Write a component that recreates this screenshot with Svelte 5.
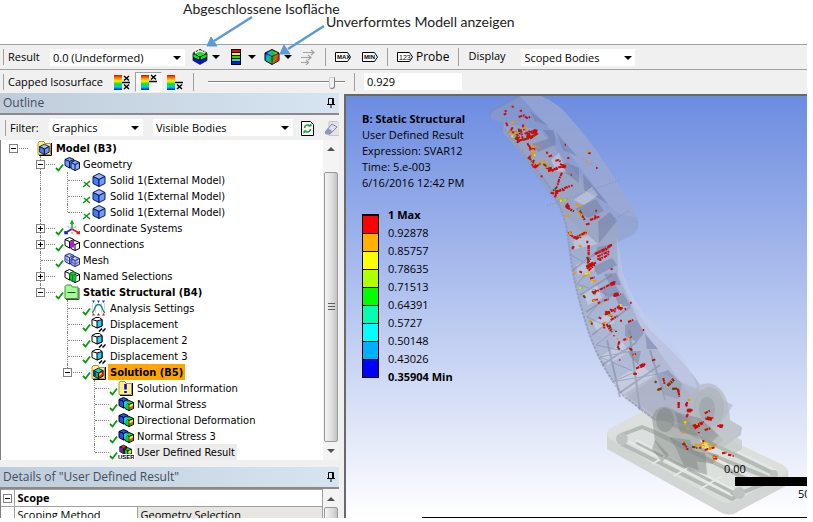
<script lang="ts">
  // Result toolbar, outline tree and graphics window of the solver

  interface TreeNode {
    label: string;
    level: number;
    icon: string;
    mark?: 'check' | 'cross';
    toggle?: '+' | '-';
    guides?: number[];
    last?: boolean;
    bold?: boolean;
    state?: 'active' | 'selected';
  }

  const nodes: TreeNode[] = [
    { label: 'Model (B3)', level: 0, icon: 'model', toggle: '-', bold: true, last: true },
    { label: 'Geometry', level: 1, icon: 'geometry', mark: 'check', toggle: '-' },
    { label: 'Solid 1(External Model)', level: 2, icon: 'solid', mark: 'cross', guides: [1] },
    { label: 'Solid 1(External Model)', level: 2, icon: 'solid', mark: 'cross', guides: [1] },
    { label: 'Solid 1(External Model)', level: 2, icon: 'solid', mark: 'cross', guides: [1], last: true },
    { label: 'Coordinate Systems', level: 1, icon: 'axes', mark: 'check', toggle: '+' },
    { label: 'Connections', level: 1, icon: 'connections', mark: 'check', toggle: '+' },
    { label: 'Mesh', level: 1, icon: 'mesh', mark: 'check' },
    { label: 'Named Selections', level: 1, icon: 'named', toggle: '+' },
    { label: 'Static Structural (B4)', level: 1, icon: 'folder', mark: 'check', toggle: '-', bold: true, last: true },
    { label: 'Analysis Settings', level: 2, icon: 'settings', mark: 'check' },
    { label: 'Displacement', level: 2, icon: 'displacement', mark: 'check' },
    { label: 'Displacement 2', level: 2, icon: 'displacement', mark: 'check' },
    { label: 'Displacement 3', level: 2, icon: 'displacement', mark: 'check' },
    { label: 'Solution (B5)', level: 2, icon: 'solution', mark: 'check', toggle: '-', bold: true, last: true, state: 'active' },
    { label: 'Solution Information', level: 3, icon: 'info', mark: 'check' },
    { label: 'Normal Stress', level: 3, icon: 'result', mark: 'check' },
    { label: 'Directional Deformation', level: 3, icon: 'result', mark: 'check' },
    { label: 'Normal Stress 3', level: 3, icon: 'result', mark: 'check' },
    { label: 'User Defined Result', level: 3, icon: 'user', mark: 'check', last: true, state: 'selected' }
  ];

  const legendColors = ['#ff0000', '#ffb000', '#ffff00', '#b0ff00', '#00ff00', '#00ffb0', '#00ffff', '#00b0ff', '#0000ff'];
  const legendLabels = ['1 Max', '0.92878', '0.85757', '0.78635', '0.71513', '0.64391', '0.5727', '0.50148', '0.43026', '0.35904 Min'];

  let isoValue = $state('0.929');
  let sliderValue = $state(92);
</script>

{#snippet cube(top: string, left: string, right: string, stroke = '#000')}
  <g {stroke} stroke-linejoin="round">
    <path d="M8 1.500 14 4.500 8 7.500 2 4.500z" fill={top} />
    <path d="M2 4.500 8 7.500V14.500L2 11.500z" fill={left} />
    <path d="M14 4.500 8 7.500V14.500L14 11.500z" fill={right} />
  </g>
{/snippet}

{#snippet pair(a: string, b: string, stroke = '#000')}
  <g {stroke} stroke-linejoin="round">
    <path d="M5.500 1.500 10 3.500V10.500L5.500 12 1 9.500V3.500z" fill={a} />
    <path d="M1 3.500 5.500 5.500 10 3.500M5.500 5.500V12" fill="none" />
    <path d="M11 4.500 15.500 6.500V12.500L11 14.500 7 12.500V6.500z" fill={b} />
    <path d="M7 6.500 11 8.500 15.500 6.500M11 8.500V14.500" fill="none" />
  </g>
{/snippet}

{#snippet nodeIcon(name: string)}
  <svg class="icon" viewBox="0 0 16 16" aria-hidden="true">
    {#if name === 'model' || name === 'solution' || name === 'info'}
      <path d="M1 3.500 2 1.500H7L8 3.500H13.500V14.500H1z" fill="#fff08c" stroke="#a8983c" />
      <path d="M14.500 3V15.500H2" fill="none" stroke="#000" />
      {#if name === 'info'}
        <path d="M7.500 4V9.500M7.500 11V13" stroke="#0000e0" stroke-width="2.500" />
      {:else}
        <g transform="translate(1 3) scale(.8)">
          {#if name === 'model'}
            {@render cube('#a9c2ff', '#4c7ef0', '#6a96ff')}
          {:else}
            {@render cube('#20c8e0', '#16c832', '#f02a10')}
            <path d="M2.500 6V11L5 12V7z" fill="#1030d0" />
            <path d="M9 8.500 12 7V9L9 11z" fill="#ffe800" />
          {/if}
        </g>
      {/if}
    {:else if name === 'solid'}
      {@render cube('#9ab8ff', '#4a7af0', '#6f9bff', '#0a1a50')}
    {:else if name === 'geometry'}
      {@render pair('#6c98ff', '#86abff', '#06133c')}
    {:else if name === 'connections'}
      {@render pair('#ffffff', '#ffffff')}
      <path d="M6 6 10 4.500V11.500L6 11.500z" fill="#b416dc" />
    {:else if name === 'mesh'}
      {@render pair('#e2e6ff', '#d5dcff', '#1a2470')}
      <path d="M1 7 6 9 10 7M3 3V11M8 4V11M3 2 8 4M7 10 11 12 15 10M9 6V13M13 6V13" stroke="#3a48d0" stroke-width=".7" fill="none" />
    {:else if name === 'named'}
      {@render pair('#ffffff', '#ffffff')}
      <path d="M5 5.500 10 3.500 12 6V12.500L9 13.500 6 11.500z" fill="#12c832" stroke="#046a18" stroke-width=".6" />
      <path d="M5 5.500 8.500 7.500 12 6M8.500 7.500V13" stroke="#046a18" stroke-width=".8" fill="none" />
    {:else if name === 'axes'}
      <path d="M8 9V1M6.500 4 8 1 9.500 4" stroke="#10b428" stroke-width="1.500" fill="none" />
      <path d="M8 9 1 13M1 11V13.500H4" stroke="#1020e0" stroke-width="1.500" fill="none" />
      <path d="M8 9 15 13M12.500 13.500H15.500V11" stroke="#e01818" stroke-width="1.500" fill="none" />
      <path d="M8 9 3 6M8 9 13 6M8 9V15" stroke="#8a8a8a" stroke-dasharray="2 1" />
    {:else if name === 'folder'}
      <path d="M1 4.500V2.500L2.500 1H7L8.500 3H14V14.500H1z" fill="#a8f59a" stroke="#3f8f3a" />
      <path d="M15 4V15.500H2" fill="none" stroke="#2a5a28" />
      <path d="M3.500 8.500H11.500" stroke="#14501a" />
    {:else if name === 'settings'}
      <path d="M1.500 3V13M13.500 3V13M4.500 3V13M10.500 3V13" stroke="#d8d8d8" />
      <path d="M1 13C4 12 3 4.500 7.500 4.500S11 12 14 13" fill="none" stroke="#11846c" stroke-width="1.300" />
      <path d="M1 .5H4L2.500 3zM6 .5H9L7.500 3zM11 .5H14L12.500 3z" fill="#1432d8" />
      <path d="M1 15.500H4L2.500 13zM6 15.500H9L7.500 13zM11 15.500H14L12.500 13z" fill="#c81616" />
    {:else if name === 'displacement'}
      <path d="M5 1.500H8.500L11 3.500V10L6 12 1 9.500V3.500z" fill="#fff" stroke="#000" />
      <path d="M6 5 11 3.500V10L6 12z" fill="#1fd3f5" stroke="#000" />
      <path d="M1 3.500 6 5" stroke="#000" />
      <path d="M8 15.500 11 12.500M11.500 15.500 14.500 12.500" stroke="#000" stroke-width="1.500" />
    {:else if name === 'user'}
      <g transform="translate(1 0) scale(.8)">
        {@render pair('#f03018', '#18d848')}
        <path d="M2 4.500 5 6V10.500L2 9z" fill="#1638f0" />
        <path d="M12 9 15 7.500V11L12 12z" fill="#ffe800" />
      </g>
      <rect x="0" y="10" width="16" height="6" fill="#fff" />
      <text x="0" y="15" font-size="6" font-weight="700" font-family="Liberation Sans, sans-serif">USER</text>
    {:else}
      {@render pair('#2450f8', '#20d848')}
      <path d="M6 6 9.500 4.500V10L6 11.500z" fill="#18cfe8" />
      <path d="M7.500 7.500 10.500 9V13.500L7.500 12z" fill="#18c838" />
      <path d="M11.500 9 15 7.500V10L11.500 11.500z" fill="#ffe800" />
      <path d="M11.500 11.500 15 10V12L11.500 13.500z" fill="#f04010" />
    {/if}
  </svg>
{/snippet}

{#snippet bands()}
  <rect x="0" y="1" width="8" height="15" fill="url(#rainbow)" />
{/snippet}

{#snippet pin()}
  <svg class="pin" viewBox="0 0 8 10" aria-hidden="true">
    <path d="M1.500 6V.5H6.500V6M0 6.500H8M4 7V10M5.500 1V6" fill="none" stroke="#000" />
  </svg>
{/snippet}

<div class="page">
  <!-- Callouts above the toolbar -->
  <header class="callouts">
    <p class="callout first">Abgeschlossene Isofläche</p>
    <p class="callout second">Unverformtes Modell anzeigen</p>
    <svg class="arrows" viewBox="0 0 340 64" aria-hidden="true">
      <g stroke="#5b9bd5" stroke-width="2.500" fill="#5b9bd5">
        <path d="M252 17 214 41" />
        <path d="M324 26 288 49" />
        <path d="M207 46 211 37 217 46z" stroke-width="1" />
        <path d="M280 54 284 45 290 54z" stroke-width="1" />
      </g>
    </svg>
  </header>

  <svg class="defs" aria-hidden="true">
    <defs>
      <linearGradient id="rainbow" x1="0" y1="0" x2="0" y2="1">
        <stop offset="0" stop-color="#f00000" />
        <stop offset=".25" stop-color="#ffa000" />
        <stop offset=".4" stop-color="#fff000" />
        <stop offset=".6" stop-color="#10e020" />
        <stop offset=".8" stop-color="#00d0f0" />
        <stop offset="1" stop-color="#0010e0" />
      </linearGradient>
      <linearGradient id="spectrum" x1="0" y1="0" x2="1" y2=".4">
        <stop offset="0" stop-color="#1020d0" />
        <stop offset=".35" stop-color="#10b8e8" />
        <stop offset=".6" stop-color="#18b838" />
        <stop offset=".8" stop-color="#e8b010" />
        <stop offset="1" stop-color="#c01808" />
      </linearGradient>
    </defs>
  </svg>

  <!-- Result toolbar -->
  <div class="toolbar" role="toolbar" aria-label="Result">
    <span class="grip"></span>
    <label class="name" for="result-set">Result</label>
    <span class="select result-set">
      <select id="result-set"><option>0.0 (Undeformed)</option></select>
    </span>
    <button type="button" class="tool drop" aria-label="Isosurface">
      <svg class="icon" viewBox="0 0 16 16">
        <path d="M8 .5 15 4 8 7.500 1 4z" fill="#fff" stroke="#000" stroke-dasharray="2 1" />
        <path d="M8 2.500 13 4.500 8 7 3 4.500z" fill="#10e810" />
        <path d="M1 4.500 8 8V11.500L1 8.500zM15 4.500 8 8V11.500L15 8.500z" fill="#10e810" stroke="#000" stroke-width=".8" />
        <path d="M1 8.500 8 11.500 15 8.500V11.500L8 15.500 1 11.500z" fill="#1010e0" stroke="#000" stroke-width=".6" />
      </svg>
    </button>
    <button type="button" class="tool drop" aria-label="Contours">
      <svg class="icon" viewBox="0 0 16 16">
        <rect x="3" y="0" width="10" height="16" fill="#000" />
        <path d="M4 2H12" stroke="#f00" stroke-width="2" />
        <path d="M4 5H12" stroke="#fff000" stroke-width="2" />
        <path d="M4 8H12" stroke="#10e010" stroke-width="2" />
        <path d="M4 11H12" stroke="#00e0f0" stroke-width="2" />
        <path d="M4 14H12" stroke="#1010f0" stroke-width="2" />
      </svg>
    </button>
    <button type="button" class="tool drop" aria-label="Edges">
      <svg class="icon" viewBox="0 0 16 16">
        <path d="M8 .5 15 4V11.500L8 15.500 1 11.500V4z" fill="url(#spectrum)" stroke="#000" />
        <path d="M8 7.500 15 4V11.500L8 15.500z" fill="#c84a10" opacity=".6" />
        <path d="M9 8 11 7 10 13 9 13.500z" fill="#18a838" />
        <path d="M1 4 8 7.500 15 4M8 7.500V15.500" fill="none" stroke="#000" stroke-width=".7" />
      </svg>
    </button>
    <button type="button" class="tool" aria-label="Vectors">
      <svg class="icon" viewBox="0 0 16 16">
        <path d="M3 3.500H14M11 1 14 3.500 11 6M1 8.500H11M8 6 11 8.500 8 11M1 13.500H8M6 11 8.500 13.500 6 16" fill="none" stroke="#a0a0a0" stroke-width="1.200" />
      </svg>
    </button>
    <span class="separator"></span>
    {#each ['MAX', 'MIN'] as tag}
      <button type="button" class="tool tag" aria-label={tag}>
        <svg class="icon" viewBox="0 0 16 16">
          <path d="M.5 3.500H12.500L15.500 8 12.500 12.500H.5z" fill="#fff" stroke="#000" />
          <text x="2" y="10" font-size="6" font-weight="700" font-family="Liberation Sans, sans-serif">{tag}</text>
        </svg>
      </button>
    {/each}
    <span class="separator"></span>
    <button type="button" class="tool probe">
      <svg class="icon" viewBox="0 0 16 16" aria-hidden="true">
        <path d="M.5 3.500H12.500L15.500 8 12.500 12.500H.5z" fill="#fff" stroke="#000" />
        <text x="2" y="11" font-size="7" font-family="Liberation Sans, sans-serif">123</text>
      </svg>
      Probe
    </button>
    <span class="separator"></span>
    <label class="name display" for="display-scope">Display</label>
    <span class="select display-scope">
      <select id="display-scope"><option>Scoped Bodies</option></select>
    </span>
  </div>

  <!-- Capped isosurface toolbar -->
  <div class="toolbar iso" role="toolbar" aria-label="Capped Isosurface">
    <span class="grip"></span>
    <label class="name" for="iso-value">Capped Isosurface</label>
    <button type="button" class="cap" aria-label="Isosurface">
      <svg class="icon" viewBox="0 0 16 16">{@render bands()}<path d="M8 8.500H16M10 2 15 6.500M15 2 10 6.500M10 10.500 15 15M15 10.500 10 15" stroke="#000" stroke-width="1.500" /></svg>
    </button>
    <button type="button" class="cap pressed" aria-label="Top capped isosurface" aria-pressed="true">
      <svg class="icon" viewBox="0 0 16 16">{@render bands()}<path d="M8 7.500H16M10 1 15 5.500M15 1 10 5.500" stroke="#000" stroke-width="1.500" /></svg>
    </button>
    <button type="button" class="cap" aria-label="Bottom capped isosurface">
      <svg class="icon" viewBox="0 0 16 16">{@render bands()}<path d="M8 8.500H16M10 10.500 15 15M15 10.500 10 15" stroke="#000" stroke-width="1.500" /></svg>
    </button>
    <span class="separator"></span>
    <input class="slider" type="range" min="0" max="100" bind:value={sliderValue} aria-label="Isosurface position" />
    <span class="separator"></span>
    <input class="iso-value" id="iso-value" type="text" bind:value={isoValue} />
  </div>

  <main class="workspace">
    <aside class="sidebar">
      <!-- Outline panel -->
      <section class="outline">
        <h2 class="panel-title">Outline {@render pin()}</h2>
        <div class="filter">
          <span class="grip"></span>
          <label for="filter-type">Filter:</label>
          <span class="select filter-type">
            <select id="filter-type"><option>Graphics</option></select>
          </span>
          <span class="select filter-value">
            <select aria-label="Filter value"><option>Visible Bodies</option></select>
          </span>
          <button type="button" class="tool" aria-label="Refresh">
            <svg class="icon" viewBox="0 0 16 16">
              <path d="M1.500 1.500H10.500L13.500 4.500V15.500H1.500z" fill="#fff" stroke="#000" />
              <path d="M4.500 8C4.500 5 8 4 10 6M10.500 9C10.500 12 7 13 5 11" fill="none" stroke="#149a28" stroke-width="1.500" />
              <path d="M8 6.500H11.500V3zM7 10.500H3.500V14z" fill="#149a28" />
            </svg>
          </button>
          <button type="button" class="tool" aria-label="Clear">
            <svg class="icon" viewBox="0 0 16 16">
              <path d="M5 1.500H13L16 4.500V15.500H5z" fill="#e4e4e4" stroke="#c4c4c4" />
              <path d="M1 12 8 4 13 7 6 14H2z" fill="#dde0f4" stroke="#8085a8" />
              <path d="M1 12 4 8 8 11 6 14H2z" fill="#8f96c4" />
            </svg>
          </button>
        </div>
        <div class="tree-area">
          <ul class="tree">
            {#each nodes as node}
              <li class="node">
                {#each Array(node.level) as _, depth}
                  <span class="guide" class:line={node.guides?.includes(depth)}></span>
                {/each}
                <span class="elbow" class:root={node.level === 0} class:last={node.last}>
                  {#if node.toggle}
                    <button type="button" class="toggle" class:plus={node.toggle === '+'} aria-label={node.toggle === '+' ? 'Expand' : 'Collapse'}></button>
                  {/if}
                </span>
                <svg class="mark" viewBox="0 0 9 16" aria-hidden="true">
                  {#if node.mark === 'check'}
                    <path d="M1 12 3.500 14.500 8 8.500" fill="none" stroke="#0a960f" stroke-width="1.800" />
                  {:else if node.mark === 'cross'}
                    <path d="M2 10 8 15M8 9 1 15" fill="none" stroke="#0a960f" stroke-width="1.500" />
                  {/if}
                </svg>
                {@render nodeIcon(node.icon)}
                <span class="label" class:bold={node.bold} class:active={node.state === 'active'} class:selected={node.state === 'selected'}>
                  {node.label}
                </span>
              </li>
            {/each}
          </ul>
          <div class="scrollbar">
            <span class="arrow up"></span>
            <span class="thumb"></span>
            <span class="arrow down"></span>
          </div>
        </div>
      </section>

      <!-- Details panel -->
      <section class="details">
        <h2 class="panel-title">Details of "User Defined Result" {@render pin()}</h2>
        <div class="details-area">
          <table>
            <colgroup>
              <col class="col-fold" />
              <col class="col-key" />
              <col />
            </colgroup>
            <tbody>
              <tr>
                <td class="fold"><button type="button" class="toggle" aria-label="Collapse"></button></td>
                <th colspan="2">Scope</th>
              </tr>
              <tr>
                <td class="fold"></td>
                <td>Scoping Method</td>
                <td class="value">Geometry Selection</td>
              </tr>
            </tbody>
          </table>
          <div class="scrollbar">
            <span class="arrow up"></span>
            <span class="thumb"></span>
          </div>
        </div>
      </section>
    </aside>

    <!-- Graphics window -->
    <section class="viewport">
      <svg class="scene" viewBox="347 96 460 422" preserveAspectRatio="xMaxYMin meet" aria-hidden="true">
        <!-- Base plate -->
        <path d="M607 434V449L722 513Q731 517 739 511L786 486Q789 484 788 470L730 502z" fill="#cdd2cf" opacity=".9" />
        <path d="M609 429 650 408Q656 405 663 408L783 465Q791 470 785 475L738 500Q729 505 720 501L611 440Q604 434 609 429z" fill="#dadedb" opacity=".95" />
        <g fill="none" stroke="#b4bab6" stroke-width="4" stroke-linejoin="round">
          <path d="M621 435 642 427 774 480 741 493 732 499 622 444" />
          <path d="M636 443 735 494M650 430 758 485M672 424 775 474" />
        </g>
        <g fill="none" stroke="#e6e9e6" stroke-width="2">
          <path d="M636 440 737 491M652 427 760 481M622 438 730 494M674 421 777 471" />
          <path d="M652 464 674 451M674 476 696 463M700 489 722 476" />
        </g>
        <g fill="#bdc3c0">
          <circle cx="622" cy="439" r="6" />
          <circle cx="739" cy="493" r="6" />
          <circle cx="774" cy="474" r="4" />
        </g>

        <!-- Arm, upper shell -->
        <path d="M490 115Q490 111 495 109L520 96H541Q560 104 571 119Q606 158 637 217Q641 228 634 234L606 248Q597 250 592 243L560 208 504 132 503 123 492 120z" fill="#919dbf" opacity=".55" />
        <path d="M520 96H541Q560 104 571 119Q606 158 637 217Q620 218 609 205L555 135z" fill="#a0aedb" opacity=".5" />
        <path d="M490 115Q490 111 495 109L520 96" fill="none" stroke="#7c8ab8" stroke-width="2" opacity=".6" />

        <!-- Arm, lower shell -->
        <path d="M504 123 503 132 547 183Q562 205 567 230L571 260Q574 285 587 327Q600 368 625 397L655 420 692 425 700 385Q688 365 650 330Q630 305 622 275L617 228 590 190 540 130z" fill="#a0a8c0" opacity=".6" />
        <path d="M617 235Q621 265 624 277Q632 300 650 320Q685 350 697 387L690 395Q665 360 640 325L618 275z" fill="#c3cdec" opacity=".6" />
        <path d="M504 129 547 183Q562 205 567 230L571 260Q574 285 587 327Q600 368 625 397L655 420" fill="none" stroke="#8b94b2" stroke-width="2" stroke-dasharray="3 1" opacity=".7" />
        <g fill="#66719a" opacity=".4">
          <path d="M530 111 549 126 535 121zM543 130 554 130 556 146zM556 132 577 156 563 150zM565 162 579 168 579 183 563 171zM583 174 608 204 584 190zM575 209 596 199 604 211 588 218zM598 221 610 212 617 221 599 243zM532 144 550 138 555 145 538 152z" />
          <path d="M598 247 612 244 607 253 595 254zM592 267 612 258 617 265 598 275zM604 274 616 273 621 285 610 285zM600 289 614 282 620 293 606 297zM615 296 623 293 631 306 619 306zM625 325 637 320 644 333 637 342 625 336zM645 334 658 349 647 349zM628 351 641 351 638 365 630 356zM657 374 668 370 682 384 679 399 664 395z" />
        </g>
        <g fill="#e0e4f0" opacity=".4">
          <path d="M551 160 559 153 566 172 556 171zM574 200 592 187 598 195 584 205zM573 241 588 235 598 244 575 249zM576 265 592 257 595 270 578 275zM583 292 597 285 602 298 588 305zM592 323 609 312 615 322 598 332zM600 357 623 342 628 352 608 365zM612 382 640 365 656 376 626 398z" />
        </g>
        <g fill="none" stroke="#757e98" opacity=".45">
          <path d="M571 255 592 267 577 284 607 294 587 317 615 330 596 345 628 352 600 357 635 372 612 382 658 374" />
          <path d="M573 270 600 250M580 295 612 275M586 312 617 292M592 335 630 307M602 365 637 342M618 394 660 365M607 340 620 397M629 330 640 410M650 350 665 400" stroke-width="2" />
        </g>
        <path d="M547 206 620 180M607 223 629 211" stroke="#7280aa" stroke-dasharray="1 2" opacity=".6" />

        <!-- Bracket at the foot -->
        <path d="M624 394 658 418 710 440 733 405 690 386 660 372z" fill="#a5acbb" opacity=".5" />
        <path d="M690 396Q698 380 713 384Q729 391 730 420L742 427 741 435 723 447 690 430z" fill="#b4bbc0" opacity=".75" />
        <ellipse cx="709" cy="407" rx="15" ry="20" fill="#a9b0b8" opacity=".55" />
        <ellipse cx="707" cy="409" rx="8" ry="12" fill="#8d959b" opacity=".4" />
        <path d="M652 418Q656 405 667 407Q678 410 692 425L705 450 707 475 690 470 677 464 666 457 655 442z" fill="#8c9390" opacity=".55" />
        <g fill="#767d7a" opacity=".4">
          <ellipse cx="665" cy="420" rx="9" ry="12" />
          <ellipse cx="665" cy="420" rx="5" ry="8" />
          <path d="M675 412 700 418 724 440 711 449 698 436 680 432zM669 437 690 440 699 470 684 466 676 448zM690 450 719 455 713 464 694 461zM655 440 669 455 662 462 652 449z" />
        </g>
        <path d="M723 431 742 440V449L735 453 712 442z" fill="#c3c9c6" opacity=".7" />

        <!-- Isosurface fragments, head of the arm -->
        <g class="fragments" transform="translate(480 90) scale(.3333)">
          <path class="dark" d="M110 158l14-8 30-6 18-14M116 116l4 20M146 202l10 12M190 222l30 22M232 290l-14 14M260 352l22 12M300 362l8 20M286 446l20-6M322 500l4 16M324 530l14-8M140 134l26-14" />
          <path class="red" d="M71 74l8-4M74 63h6M95 50h6M119 62h7M116 81l16-5 8 8 14-4M78 98l6 12M98 112l-8 14 20 2M108 130l12 16M122 118l6 28M128 104l6 18M134 132l18-10 6 10 14-12M112 152l22-4 24-10 16-8M142 160l10 16 16 2M150 168v14M144 206l10-10M162 210l-6 18 14 6M166 228l16-8M198 188h6M206 200l10-4M226 212l10-2 6 6M198 232l18 10 16-10 26-2M204 244l30-8M240 222l20 8M182 258l6 2M246 248l-8 18-6 22M234 304l20-10 24-8M212 308l18 4-6 10M226 304l28-4M256 346l20 16M264 340l-6 12M306 374l8 16M318 404l12-4M330 390l28-10M346 376v14M264 430l10-4M280 444l20-8 20-12M322 452v8M278 470v8M326 466v24M346 492l38-16M352 500l36-16M322 520l10-14M320 536l24-14M358 510h6M386 468l10-4M254 164h4M262 204h6M324 188l8 3M348 234h5M272 254h3M346 362h5" />
          <path class="red wide" d="M106 142l10 6M140 142l12-6M158 126l12-4M166 222l8 8M206 238l10-2M258 348l10 4M226 308l8-2M246 228l10 2" />
          <path class="orange" d="M92 98l14-4M88 124l8 8M102 128l10 2M130 116l8-6M152 168l24 4M164 190l-10 12M168 222l18-6M188 212l12 8M206 224l-6 10M160 178l-4 16M236 326l24 4M288 342l20 10M292 366l18 12M256 378l14 2M270 424v10M302 436l20-6M296 468h8M306 204h3M318 218l4-3M332 222h3M320 186h6" />
          <path class="yellow" d="M94 138l12 2M240 332l16-2M162 196h4M294 440l8-3" />
          <path class="green" d="M100 139h9M246 330h5M296 438h4" />
        </g>

        <!-- Isosurface fragments, middle -->
        <g class="fragments" transform="translate(550 230) scale(.3333)">
          <path class="dark" d="M112 82l4 12M108 110l22-12M126 184l10 10M100 196l6 8M122 274l6 12M168 246l18 14M178 284l8 22M202 350l8 10M238 354l6 6M250 432h10M314 454l6 4M322 480l14-6M354 468l18-18M366 476h16" />
          <path class="red" d="M60 14l20 12 10-10 22-10M70 48v6M116 46v30M134 72l24-12 28-14M142 88l24-8 12-10M112 108l26-10M116 122l18-18M88 124l8 4M120 146l14-4M182 118l6-2M130 188l30-14 38-20M138 180l-4 10M190 198l22-6M126 212l18-4M144 220l6-4M162 212l14-4M164 254l16-8 34-20M166 244l20 16M182 270l20-12M180 238l18 8M210 240l8-8M224 238l4-2M240 218h5M234 276l16-6M160 278l4 20M170 282l12 22M192 316v3M208 334l-4 16M220 330l12-4M240 320h5M278 300h5M242 356l4 6M248 376l10-4M258 416l28-14M306 392l10-4M208 390h3M340 444l4 20M352 466l18-20M384 476l4 24M386 516v18M408 520l2 10M210 272h6M146 262l8 4M198 302v4" />
          <path class="red wide" d="M118 106l12-6M168 250l12-2M192 196l14-4M182 164l12-6M270 410l12-6M204 234l8-4" />
          <path class="orange" d="M56 8l10 6M106 4h6M90 50h4M72 124l4 8M104 138l20-10M122 154l20-2M88 170l10 8M128 210l6 4M78 150v2M154 222h3M118 270l6 8M176 256h10M160 280l8-4M202 324v4M228 326h6M250 378l6-3M326 482l6-4M356 462l10-8M416 506v6M236 318h6" />
          <path class="yellow" d="M104 132l16-3M88 174h12M124 156h4M212 222v8" />
          <path class="green" d="M96 172v4M176 252v6" />
        </g>

        <!-- Isosurface fragments, foot -->
        <g class="fragments" transform="translate(590 370) scale(.3333)">
          <path class="red" d="M132 10l8 2M264 58l4 20M266 96v16M292 96l-4 12M290 122l20-2M294 132l-6 12M344 130l16-8M346 146l24-2M308 168l34-12M314 176l24-16M344 180l20-6M382 168l20-2M326 186v4M280 218l10 14M292 234v6M340 210v8M328 234l16-6M344 240l30-8M368 260l14 4M396 250l14-2M428 258h3M414 254l10 2" />
          <path class="red wide" d="M312 170l16-6M350 144l16 4M388 168l10 1M370 262l12 2M292 122l12-1" />
          <path class="dark" d="M306 230l16 4M232 46l20-16M250 56h12M204 60l10-4M280 220v6" />
          <path class="orange" d="M294 90h7M280 154l12 4M286 160v6M292 178h4M276 188h6M318 162h6M314 224l20 2M332 222l16-4 28 12M354 236h12M366 262h18" />
          <path class="yellow" d="M286 154v6M342 220l14 2M334 232l18-4" />
        </g>

        <!-- Scale ruler -->
        <rect x="735" y="477" width="72" height="9" />
        <g class="scale-text">
          <text x="724" y="473">0.00</text>
          <text x="798" y="498">50</text>
        </g>
        <path d="M422 517.500H807" stroke="#000" />
      </svg>

      <div class="summary">
        <strong>B: Static Structural</strong>
        <span>User Defined Result</span>
        <span>Expression: SVAR12</span>
        <span>Time: 5.e-003</span>
        <span>6/16/2016 12:42 PM</span>
      </div>
      <div class="legend">
        <div class="swatches">
          {#each legendColors as color}
            <span class="swatch" style:background-color={color}></span>
          {/each}
        </div>
        <ul class="values">
          {#each legendLabels as label, i}
            <li class:bold={i === 0 || i === legendLabels.length - 1}>{label}</li>
          {/each}
        </ul>
      </div>
    </section>
  </main>
</div>

<style>
  :global(body) {
    background: #fff;
    overflow: hidden;
  }

  .page {
    position: relative;
    padding-right: 6px;
    font-family: 'Open Sans', 'Noto Sans', sans-serif;
    font-size: 11px;
    line-height: 16px;
    color: #000;
  }

  .page :is(button, input, select) {
    margin: 0;
    padding: 0;
    border: 0;
    border-radius: 0;
    background: none;
    font: inherit;
    color: inherit;
  }

  .defs {
    position: absolute;
    width: 0;
    height: 0;
  }

  .icon {
    flex: none;
    width: 16px;
    height: 16px;
  }

  /* Callouts */
  .callouts {
    height: 44px;
    font-family: Lato, sans-serif;
    font-size: 14px;
    line-height: 17px;
    color: #222;
  }

  .callout {
    margin: 0;
  }

  .first {
    padding-left: 183px;
  }

  .callout.second {
    margin-top: -4px;
    padding-left: 326px;
  }

  .arrows {
    position: absolute;
    top: 0;
    left: 0;
    z-index: 1;
    width: 340px;
    height: 64px;
    pointer-events: none;
  }

  /* Toolbars */
  .toolbar {
    display: flex;
    align-items: center;
    box-sizing: border-box;
    height: 25px;
    padding-left: 2px;
    border-top: 1px solid #a0a0a0;
    background: #f0f0f0;
  }

  .toolbar.iso {
    height: 24px;
  }

  .grip {
    flex: none;
    width: 1px;
    height: 16px;
    margin-right: 4px;
    border-right: 1px solid #a0a0a0;
  }

  .name {
    flex: none;
    white-space: nowrap;
  }

  .toolbar:not(.iso) .name {
    width: 42px;
  }

  .toolbar.iso .name {
    width: 105px;
  }

  .toolbar .name.display {
    width: 53px;
    padding-bottom: 3px;
  }

  .select {
    position: relative;
    flex: none;
    height: 17px;
    background: #fff;
  }

  .select::after {
    content: '';
    position: absolute;
    top: 7px;
    right: 4px;
    border: 4px solid transparent;
    border-top-color: #000;
    border-bottom: 0;
    pointer-events: none;
  }

  .page .select select {
    display: block;
    appearance: none;
    width: 100%;
    height: 17px;
    padding: 0 14px 0 3px;
    line-height: 17px;
  }

  .result-set {
    width: 135px;
    margin-right: 7px;
  }

  .display-scope {
    width: 114px;
  }

  .display-scope::after {
    right: 3px;
  }

  .tool {
    display: flex;
    flex: none;
    align-items: center;
    height: 18px;
  }

  .page .drop {
    margin-right: 8px;
  }

  .drop::after {
    content: '';
    margin-left: 4px;
    border: 4px solid transparent;
    border-top-color: #000;
    border-bottom: 0;
  }

  .separator {
    flex: none;
    width: 1px;
    height: 18px;
    margin: 0 9px;
    background: #a0a0a0;
  }

  .page .tag + .tag {
    margin-left: 11px;
  }

  .page .probe {
    gap: 3px;
    font-size: 12px;
  }

  .cap {
    display: flex;
    flex: none;
    align-items: center;
    justify-content: center;
    box-sizing: border-box;
    width: 18px;
    height: 20px;
  }

  .page .cap.pressed {
    width: 27px;
    margin: 0 4px;
    border: 1px solid #a0a0a0;
    border-right-color: #fff;
    border-bottom-color: #fff;
    background: #f8f8f8;
  }

  .page .slider {
    appearance: none;
    width: 137px;
    height: 18px;
    margin-left: 5px;
  }

  .slider::-webkit-slider-runnable-track {
    height: 2px;
    background: #808080;
    border-bottom: 1px solid #fff;
  }

  .slider::-webkit-slider-thumb {
    appearance: none;
    width: 6px;
    height: 12px;
    margin-top: -4px;
    border: 1px solid #808080;
    border-top-color: #d0d0d0;
    border-left-color: #d0d0d0;
    border-radius: 0 0 3px 3px;
    background: #f0f0f0;
  }

  .page .iso-value {
    width: 98px;
    height: 17px;
    padding-left: 3px;
    background: #fff;
    box-sizing: border-box;
  }

  /* Workspace */
  .workspace {
    display: flex;
    gap: 5px;
    background: #f0f0f0;
  }

  .sidebar {
    display: flex;
    flex: none;
    flex-direction: column;
    gap: 7px;
    width: 339px;
  }

  .panel-title {
    display: flex;
    align-items: center;
    justify-content: space-between;
    height: 20px;
    margin: 0;
    padding: 0 4px 0 3px;
    border-bottom: 2px solid #8a8a8a;
    background: linear-gradient(90deg, #bfcddb, #d7e4f2);
    font-size: 12px;
    font-weight: 400;
    color: #434e5c;
  }

  .pin {
    width: 8px;
    height: 10px;
  }

  .filter {
    display: flex;
    align-items: center;
    box-sizing: border-box;
    height: 25px;
    padding-left: 4px;
    overflow: hidden;
  }

  .filter label {
    flex: none;
    width: 39px;
  }

  .filter-type {
    width: 94px;
    margin-right: 10px;
  }

  .filter-value {
    width: 140px;
    margin-right: 7px;
  }

  .page .filter .tool + .tool {
    margin-left: 8px;
  }

  .tree-area,
  .details-area {
    display: grid;
    grid-template-columns: 1fr 16px;
    box-sizing: border-box;
    border-left: 1px solid #808080;
    background: #fff;
  }

  /* Outline tree */
  .tree {
    margin: 0;
    padding: 0;
    list-style: none;
    font-family: 'DejaVu Sans Condensed', 'DejaVu Sans', sans-serif;
  }

  .node {
    display: flex;
    height: 16px;
  }

  .guide,
  .elbow {
    position: relative;
    flex: none;
    width: 27px;
  }

  .guide.line::before,
  .elbow::before {
    content: '';
    position: absolute;
    top: 0;
    bottom: 0;
    left: 12px;
    border-left: 1px dotted #808080;
  }

  .elbow.last::before {
    bottom: 8px;
  }

  .elbow.root::before {
    display: none;
  }

  .elbow::after {
    content: '';
    position: absolute;
    top: 8px;
    left: 13px;
    right: 0;
    border-top: 1px dotted #808080;
  }

  .page .toggle {
    position: relative;
    z-index: 1;
    display: block;
    box-sizing: border-box;
    width: 9px;
    height: 9px;
    border: 1px solid #808080;
    background: linear-gradient(#000, #000) center / 5px 1px no-repeat #fff;
  }

  .page .elbow .toggle {
    margin: 4px 0 0 8px;
  }

  .page .toggle.plus {
    background:
      linear-gradient(#000, #000) center / 5px 1px no-repeat,
      linear-gradient(#000, #000) center / 1px 5px no-repeat,
      #fff;
  }

  .mark {
    flex: none;
    width: 9px;
    height: 16px;
  }

  .label {
    margin-left: 1px;
    padding: 0 2px;
    line-height: 18px;
    white-space: nowrap;
  }

  .bold {
    font-weight: 700;
  }

  .label.active {
    background: #ffa500;
  }

  .label.selected {
    background: #ececec;
  }

  /* Scrollbars */
  .scrollbar {
    display: flex;
    flex-direction: column;
    align-items: center;
    background: #f4f4f4;
  }

  .arrow {
    flex: none;
    margin: 7px 0;
    border: 4px solid transparent;
  }

  .arrow.up {
    border-top: 0;
    border-bottom-color: #505050;
  }

  .arrow.down {
    border-bottom: 0;
    border-top-color: #505050;
  }

  .thumb {
    flex: 1;
    box-sizing: border-box;
    width: 14px;
    border: 1px solid #989898;
    border-radius: 2px;
    background: linear-gradient(90deg, #f4f4f4, #dcdcdc 60%, #c4c4c4);
  }

  .tree-area .thumb {
    margin-top: 14px;
    background:
      repeating-linear-gradient(#606060 0 1px, transparent 1px 3px) center / 7px 9px no-repeat,
      linear-gradient(90deg, #f4f4f4, #dcdcdc 60%, #c4c4c4);
  }

  /* Details table */
  .details-area {
    height: 29px;
    overflow: hidden;
  }

  .details-area .arrow {
    margin: 8px 0 6px;
  }

  table {
    width: 100%;
    border-collapse: collapse;
    table-layout: fixed;
  }

  td,
  th {
    height: 16px;
    padding: 0 3px;
    border: 1px solid #a0a0a0;
    font-weight: 400;
    line-height: 16px;
    text-align: left;
    white-space: nowrap;
  }

  th {
    font-weight: 700;
  }

  .col-fold {
    width: 13px;
  }

  .col-key {
    width: 123px;
  }

  .fold {
    padding: 0 0 0 2px;
    border-left: 0;
  }

  .value {
    background: #e8e6e2;
  }

  /* Graphics window */
  .viewport {
    position: relative;
    flex: 1;
    min-width: 0;
    margin-top: 1px;
    padding: 15px 0 0 16px;
    border-top: 2px solid #696969;
    border-left: 2px solid #696969;
    background: linear-gradient(#6c8ce0, #ffffff);
  }

  .scene {
    position: absolute;
    inset: 0;
    width: 100%;
    height: 100%;
  }

  .fragments path {
    fill: none;
    stroke-width: 6px;
    stroke-dasharray: 11 2 5 3;
  }

  .fragments .wide {
    stroke-width: 11px;
    stroke-dasharray: none;
  }

  .fragments .dark {
    stroke: #6b3f08;
  }

  .fragments .red {
    stroke: #cf0a0a;
  }

  .fragments .orange {
    stroke: #e89a08;
  }

  .fragments .yellow {
    stroke: #e8e410;
  }

  .fragments .green {
    stroke: #30d060;
  }

  .scale-text {
    font-size: 11px;
  }

  .summary {
    position: relative;
    display: grid;
    white-space: nowrap;
  }

  .legend {
    position: relative;
    display: flex;
    gap: 9px;
    margin-top: 15px;
  }

  .swatches {
    width: 17px;
    margin-top: 8px;
    align-self: flex-start;
    box-sizing: border-box;
    border: 1px solid #000;
  }

  .swatch {
    display: block;
    box-sizing: border-box;
    height: 18px;
    border-top: 1px solid #000;
  }

  .values {
    margin: 0;
    padding: 0;
    list-style: none;
  }

  .values li {
    height: 18px;
    line-height: 18px;
  }
</style>
